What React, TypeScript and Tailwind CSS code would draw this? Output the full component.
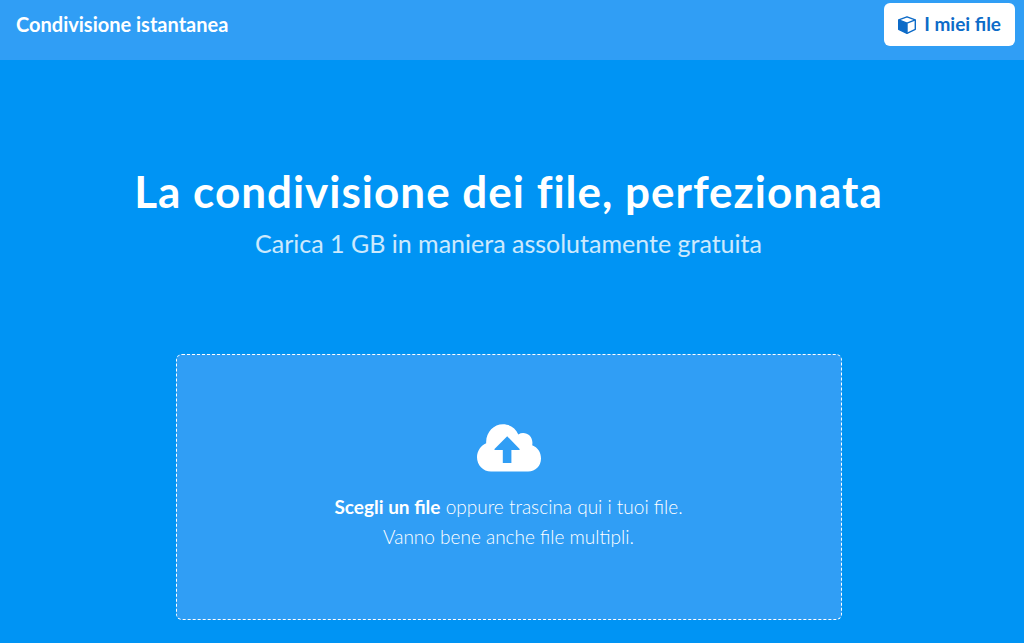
import React, { useState } from 'react';

function CubeIcon() {
    return (
        <svg viewBox="0 0 18 18" className="w-[18px] h-[18px]" fill="none" stroke="currentColor" strokeLinejoin="round" aria-hidden="true">
            <path d="M9 .8 17.3 3.9v9.4L9 17.3.7 13.3V3.9Z" strokeWidth="1.4" />
            <path d="M.7 3.9 9 7.1l8.3-3.2M9 7.1v10.2" strokeWidth="1.4" />
            <path d="M.7 3.9 9 7.1v10.2L.7 13.3Z" fill="currentColor" stroke="none" />
        </svg>
    );
}

function CloudUploadIcon() {
    return (
        <svg viewBox="0 0 64 48" className="w-16 h-12" fill="currentColor" aria-hidden="true">
            <path
                fillRule="evenodd"
                d="M14 47.5C6 47.5 0 41 0 33.2 0 27 3.800 21.300 9.200 19.200 8.500 8.500 16.500.2 26 .2c7 0 12.700 4 15.300 10.200 6.500-4 15.700 1 13.900 10.900C60.600 23.400 64 28.300 64 34.500c0 7.500-5.500 13-12.800 13ZM30.200 12.300 17.500 24.900v1.100h8.300v13h8.600V26h8.200v-1.100Z"
            />
        </svg>
    );
}

export default function App() {
    const [files, setFiles] = useState<File[]>([]);

    return (
        <div className="min-h-screen bg-[#0094f4] text-white font-['Lato',sans-serif]">
            <header className="flex justify-between items-start h-[60px] bg-[#309ef5] pl-4 pr-[9px] pt-[3px]">
                <a href="#" className="text-xl leading-[43px] font-bold">Condivisione istantanea</a>
                <button className="flex items-center gap-2 h-[43px] px-3.5 rounded-md bg-white text-[#0d6bc8] text-[19px] font-bold">
                    <CubeIcon />
                    I miei file
                </button>
            </header>

            <main className="flex flex-col items-center pr-[7px] pt-[99px]">
                <h1 className="text-[44px] leading-[64px] font-bold tracking-[1px] text-center">La condivisione dei file, perfezionata</h1>
                <p className="mt-1 text-[25px] leading-[32px] text-white/80 text-center">Carica 1 GB in maniera assolutamente gratuita</p>

                <label className="mt-[95px] mb-6 flex flex-col items-center w-2/3 max-w-[666px] h-[266px] pt-[69px] rounded-md border border-dashed border-white bg-[#309ef5] text-[19px] leading-[30px] font-light text-center cursor-pointer">
                    <input
                        type="file"
                        multiple
                        className="sr-only"
                        onChange={e => setFiles(Array.from(e.target.files ?? []))}
                    />
                    <CloudUploadIcon />
                    <span className="mt-5">
                        <strong className="font-bold">Scegli un file</strong> oppure trascina qui i tuoi file.
                    </span>
                    <span>Vanno bene anche file multipli.</span>
                    {files.length > 0 && <span>{files.map(f => f.name).join(', ')}</span>}
                </label>
            </main>
        </div>
    );
}
